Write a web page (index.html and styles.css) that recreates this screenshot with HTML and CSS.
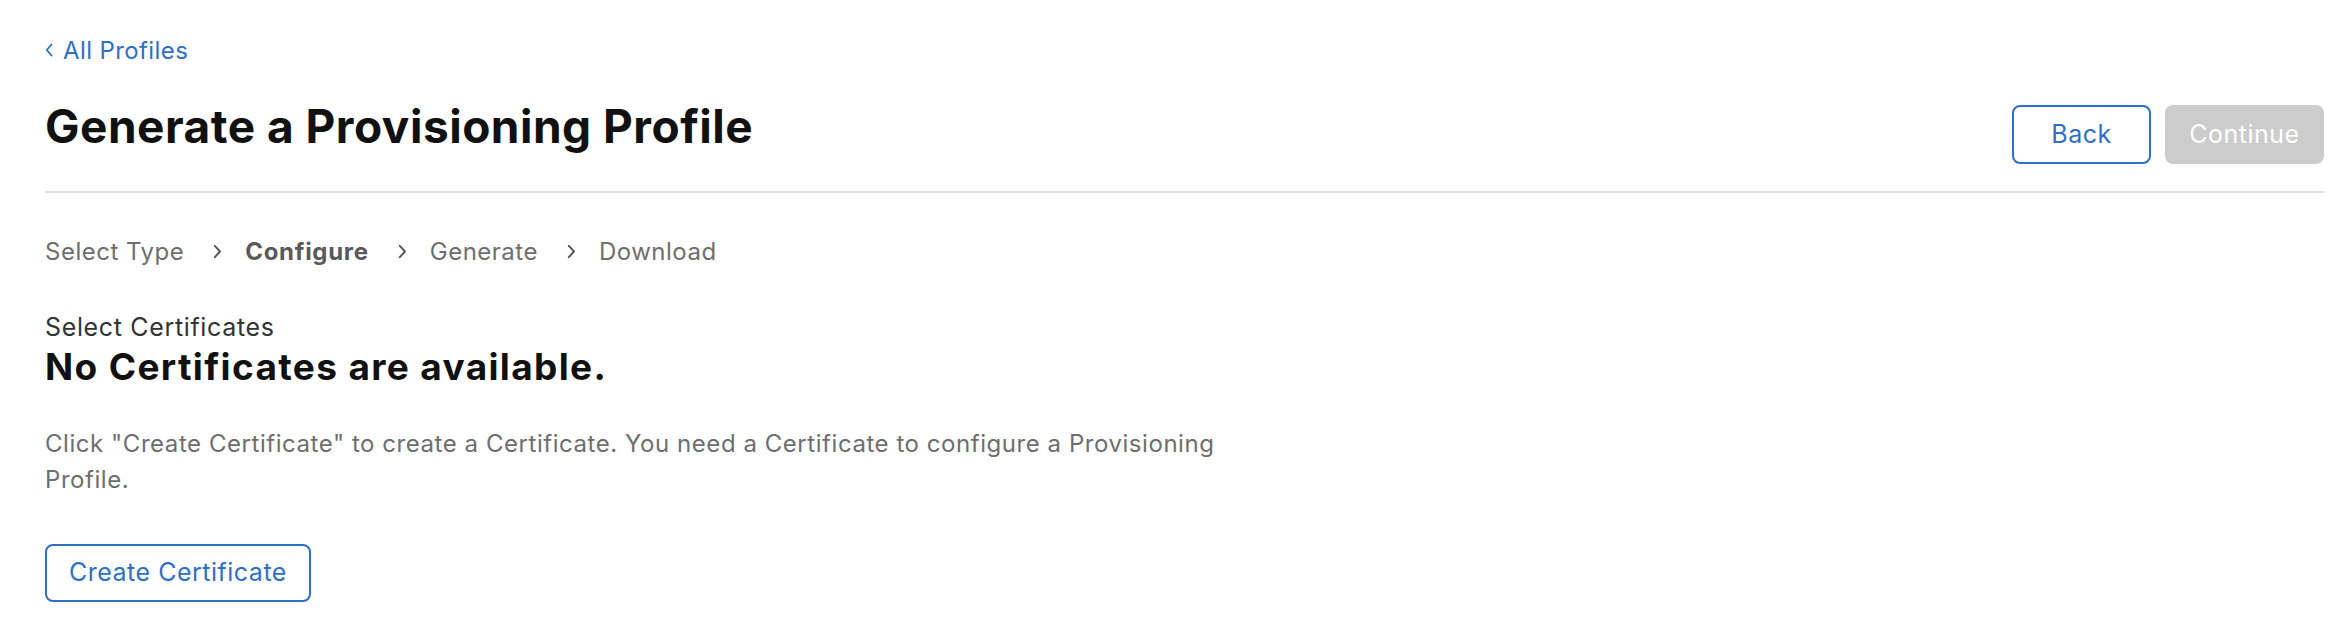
FILE: index.html
```html
<!DOCTYPE html>
<html lang="en">
<head>
<meta charset="utf-8">
<title>Generate a Provisioning Profile</title>
<link rel="stylesheet" href="styles.css">
</head>
<body>
<div class="page">
  <a class="back-link" href="#">
    <svg class="back-chevron" width="8" height="14" viewBox="0 0 8 14" aria-hidden="true"><path d="M6.5 1.5 L1.8 7 L6.5 12.5" fill="none" stroke="currentColor" stroke-width="1.8" stroke-linecap="round" stroke-linejoin="round"/></svg>
    <span>All Profiles</span>
  </a>

  <header class="header">
    <h1 class="title">Generate a Provisioning Profile</h1>
    <div class="actions">
      <button class="btn btn-outline btn-back" type="button">Back</button>
      <button class="btn btn-disabled" type="button" disabled>Continue</button>
    </div>
  </header>

  <nav class="steps">
    <span class="step">Select Type</span>
    <svg class="step-chevron" width="9" height="15" viewBox="0 0 9 15" aria-hidden="true"><path d="M1.8 1.8 L7 7.5 L1.8 13.2" fill="none" stroke="currentColor" stroke-width="1.9" stroke-linecap="round" stroke-linejoin="round"/></svg>
    <span class="step step-current">Configure</span>
    <svg class="step-chevron" width="9" height="15" viewBox="0 0 9 15" aria-hidden="true"><path d="M1.8 1.8 L7 7.5 L1.8 13.2" fill="none" stroke="currentColor" stroke-width="1.9" stroke-linecap="round" stroke-linejoin="round"/></svg>
    <span class="step">Generate</span>
    <svg class="step-chevron" width="9" height="15" viewBox="0 0 9 15" aria-hidden="true"><path d="M1.8 1.8 L7 7.5 L1.8 13.2" fill="none" stroke="currentColor" stroke-width="1.9" stroke-linecap="round" stroke-linejoin="round"/></svg>
    <span class="step">Download</span>
  </nav>

  <section class="content">
    <div class="label">Select Certificates</div>
    <h2 class="empty-title">No Certificates are available.</h2>
    <p class="empty-text">Click "Create Certificate" to create a Certificate. You need a Certificate to configure a Provisioning Profile.</p>
    <button class="btn btn-outline btn-create" type="button">Create Certificate</button>
  </section>
</div>
</body>
</html>
```

FILE: styles.css
```css
* {
  box-sizing: border-box;
}

html, body {
  margin: 0;
  padding: 0;
  background: #ffffff;
}

body {
  font-family: "Inter", "Noto Sans", sans-serif;
  color: #1d1d1f;
  font-size: 24px;
}

.page {
  padding: 34px 20px 0 45px;
}

.back-link {
  display: inline-flex;
  align-items: center;
  gap: 10px;
  color: #2f6fc6;
  text-decoration: none;
  font-size: 24px;
  line-height: 29px;
  letter-spacing: 0.4px;
}

.back-chevron {
  display: block;
}

.header {
  display: flex;
  justify-content: space-between;
  align-items: flex-start;
  margin-top: 35px;
  padding-bottom: 27px;
  border-bottom: 2px solid #e0e0e0;
}

.title {
  margin: -2px 0 0;
  font-size: 46px;
  line-height: 56px;
  font-weight: 700;
  color: #111111;
  letter-spacing: 0.5px;
}

.actions {
  display: flex;
  gap: 14px;
  margin-top: 5px;
}

.btn {
  font-family: inherit;
  font-size: 25px;
  line-height: 29px;
  letter-spacing: 0.5px;
  height: 59px;
  border-radius: 8px;
  padding: 0 25px;
  display: inline-flex;
  align-items: center;
  justify-content: center;
  cursor: pointer;
}

.btn-outline {
  background: #ffffff;
  color: #2f6fc6;
  border: 2px solid #2f6fc6;
}

.btn-back {
  width: 139px;
}

.btn-disabled {
  background: #cccccc;
  color: #ffffff;
  border: 0;
  width: 159px;
  cursor: default;
}

.steps {
  display: flex;
  align-items: center;
  margin-top: 44px;
  color: #6e6e6e;
  font-size: 24px;
  line-height: 29px;
  letter-spacing: 0.5px;
}

.step-chevron {
  display: block;
  margin: 0 23px 0 29px;
  color: #555555;
}

.step-current {
  font-weight: 700;
  color: #5a5a5a;
  letter-spacing: 0.7px;
}

.content {
  margin-top: 47px;
}

.label {
  font-size: 25px;
  line-height: 29px;
  letter-spacing: 0.65px;
  color: #333333;
}

.empty-title {
  margin: 4px 0 0;
  font-size: 37px;
  line-height: 41px;
  letter-spacing: 1.35px;
  font-weight: 700;
  color: #111111;
}

.empty-text {
  margin: 39px 0 0;
  max-width: 1230px;
  font-size: 24px;
  line-height: 36px;
  letter-spacing: 0.55px;
  color: #6e6e6e;
}

.btn-create {
  margin-top: 46px;
  height: 58px;
  padding: 0 22px;
}
```
